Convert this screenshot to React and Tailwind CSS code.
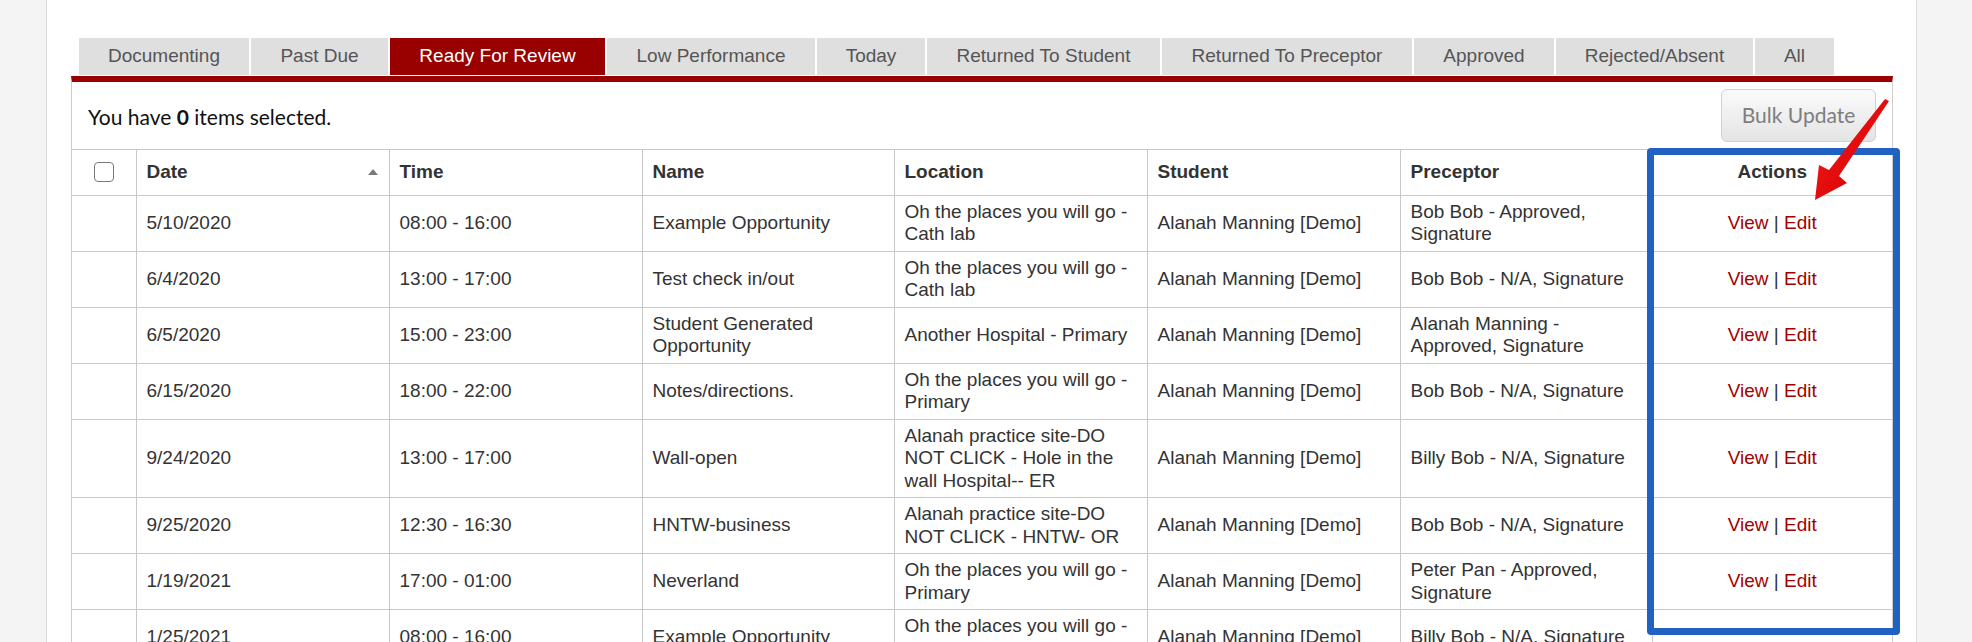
import React from "react";

const tabs = [
  { label: "Documenting", w: "w-[170px]" },
  { label: "Past Due", w: "w-[137px]" },
  { label: "Ready For Review", w: "w-[215px]", active: true },
  { label: "Low Performance", w: "w-[208px]" },
  { label: "Today", w: "w-[108px]" },
  { label: "Returned To Student", w: "w-[233px]" },
  { label: "Returned To Preceptor", w: "w-[250px]" },
  { label: "Approved", w: "w-[140px]" },
  { label: "Rejected/Absent", w: "w-[197px]" },
  { label: "All", w: "w-[79px]" },
];

const rows = [
  ["5/10/2020", "08:00 - 16:00", "Example Opportunity", "Oh the places you will go - Cath lab", "Alanah Manning [Demo]", "Bob Bob - Approved, Signature"],
  ["6/4/2020", "13:00 - 17:00", "Test check in/out", "Oh the places you will go - Cath lab", "Alanah Manning [Demo]", "Bob Bob - N/A, Signature"],
  ["6/5/2020", "15:00 - 23:00", "Student Generated Opportunity", "Another Hospital - Primary", "Alanah Manning [Demo]", "Alanah Manning - Approved, Signature"],
  ["6/15/2020", "18:00 - 22:00", "Notes/directions.", "Oh the places you will go - Primary", "Alanah Manning [Demo]", "Bob Bob - N/A, Signature"],
  ["9/24/2020", "13:00 - 17:00", "Wall-open", "Alanah practice site-DO NOT CLICK - Hole in the wall Hospital-- ER", "Alanah Manning [Demo]", "Billy Bob - N/A, Signature"],
  ["9/25/2020", "12:30 - 16:30", "HNTW-business", "Alanah practice site-DO NOT CLICK - HNTW- OR", "Alanah Manning [Demo]", "Bob Bob - N/A, Signature"],
  ["1/19/2021", "17:00 - 01:00", "Neverland", "Oh the places you will go - Primary", "Alanah Manning [Demo]", "Peter Pan - Approved, Signature"],
  ["1/25/2021", "08:00 - 16:00", "Example Opportunity", "Oh the places you will go - Cath lab", "Alanah Manning [Demo]", "Billy Bob - N/A, Signature"],
];

const td = "border-l border-b border-[#c8c8c8] px-[10px] py-[5px] align-middle";
const th = "border-l border-b border-t border-[#c8c8c8] px-[10px] py-[11px] text-left font-bold text-[#333]";

export default function App() {
  return (
    <div className="relative flex h-[642px] w-[1972px] overflow-hidden bg-white font-['Liberation_Sans',Arial,sans-serif] text-[19px] leading-[22.5px] text-[#333]">
      <aside className="w-[47px] shrink-0 border-r border-[#dcdcdc] bg-[#f4f4f4]" />

      <main className="w-[1869px] shrink-0 pl-[24px] pr-[23px] pt-[38px]">
        <div className="mb-[1px] flex h-[37px] gap-[2px] pl-[8px]">
          {tabs.map((t) => (
            <div
              key={t.label}
              className={`${t.w} flex shrink-0 items-center justify-center ${
                t.active ? "bg-[#990000] text-white" : "bg-[#dfdfdf] text-[#555]"
              }`}
            >
              {t.label}
            </div>
          ))}
        </div>

        <div className="border-x border-t-[6px] border-x-[#cccccc] border-t-[#990000]">
          <div className="flex h-[67px] items-center justify-between pl-[16px] pr-[16px] font-['Lato',sans-serif] text-[21px] text-[#111]">
            <div className="pt-[4px]">
              You have <span className="font-bold">0</span> items selected.
            </div>
            <button className="h-[53px] w-[155px] rounded-[6px] border border-[#d2d2d2] bg-gradient-to-b from-[#fbfbfb] to-[#e4e4e4] text-[21px] text-[#7e7e7e]">
              Bulk Update
            </button>
          </div>

          <table className="w-full table-fixed border-collapse">
            <colgroup>
              <col className="w-[64px]" />
              <col className="w-[253px]" />
              <col className="w-[253px]" />
              <col className="w-[252px]" />
              <col className="w-[253px]" />
              <col className="w-[253px]" />
              <col className="w-[252px]" />
              <col />
            </colgroup>
            <thead>
              <tr>
                <th className="border-b border-t border-[#c8c8c8] py-[11px]">
                  <div className="mx-auto h-[20px] w-[20px] rounded-[4px] border-[1.5px] border-[#7a7a7a] bg-white" />
                </th>
                <th className={th}>
                  <div className="flex items-center justify-between pr-[1px]">
                    <span>Date</span>
                    <span className="h-0 w-0 border-x-[5px] border-b-[6px] border-x-transparent border-b-[#7a7a7a]" />
                  </div>
                </th>
                <th className={th}>Time</th>
                <th className={th}>Name</th>
                <th className={th}>Location</th>
                <th className={th}>Student</th>
                <th className={th}>Preceptor</th>
                <th className={`${th} !text-center`}>Actions</th>
              </tr>
            </thead>
            <tbody>
              {rows.map((r, i) => (
                <tr key={i}>
                  <td className="border-b border-[#c8c8c8]" />
                  {r.map((c, j) => (
                    <td key={j} className={td}>
                      {c}
                    </td>
                  ))}
                  <td className={`${td} text-center`}>
                    {i < rows.length - 1 && (
                      <>
                        <span className="text-[#a30000]">View</span>
                        <span className="text-[#333]"> | </span>
                        <span className="text-[#a30000]">Edit</span>
                      </>
                    )}
                  </td>
                </tr>
              ))}
            </tbody>
          </table>
        </div>
      </main>

      <aside className="flex-1 border-l border-[#dcdcdc] bg-[#f4f4f4]" />

      <div className="pointer-events-none absolute left-[1647px] top-[148px] h-[487px] w-[253px] rounded-[4px] border-[7px] border-[#2161c1]" />

      <svg className="pointer-events-none absolute left-0 top-0" width="1972" height="642">
        <defs>
          <linearGradient id="ag" x1="0" y1="0" x2="1" y2="1">
            <stop offset="0" stopColor="#ff1a1a" />
            <stop offset="1" stopColor="#c80000" />
          </linearGradient>
        </defs>
        <polygon
          points="1885,99 1889,101 1839,176 1847,183 1815,200 1819,165 1829,170"
          fill="url(#ag)"
        />
      </svg>
    </div>
  );
}
